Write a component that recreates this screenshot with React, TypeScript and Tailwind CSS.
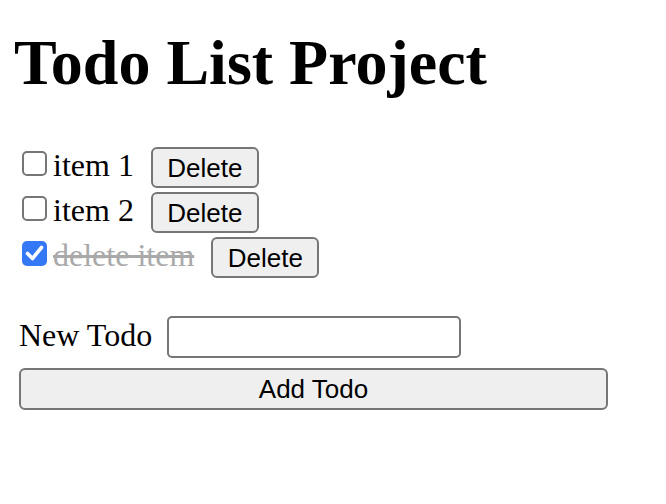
import React from "react";

const serif = "font-['Liberation_Serif',serif]";
const sans = "font-['Liberation_Sans',Arial,sans-serif]";

function Check({ checked }: { checked: boolean }) {
  if (checked) {
    return (
      <div className="ml-[22px] mt-[6px] flex h-[25px] w-[25px] shrink-0 items-center justify-center rounded-[5px] bg-[#3478f6]">
        <svg width="25" height="25" viewBox="0 0 25 25">
          <path d="M5.5 12.5 L10.5 17.5 L19.5 6.5" fill="none" stroke="#ffffff" strokeWidth="3.6" strokeLinecap="round" strokeLinejoin="round" />
        </svg>
      </div>
    );
  }
  return <div className="ml-[22px] mt-[6px] h-[25px] w-[25px] shrink-0 rounded-[5px] border-2 border-[#767676] bg-white" />;
}

function Row({ label, done }: { label: string; done?: boolean }) {
  return (
    <div className="flex h-[45px] items-start">
      <Check checked={!!done} />
      <span
        className={`${serif} ml-[6px] mt-[2px] whitespace-pre text-[32px] leading-[37px] ${
          done ? "text-[#a9a9a9] line-through" : "text-black"
        }`}
      >
        {label}
      </span>
      <button
        className={`${sans} ml-[17px] mt-[2px] flex h-[41px] w-[108px] shrink-0 items-center justify-center rounded-[6px] border-2 border-[#767676] bg-[#efefef] text-[26px] leading-[30px] text-black`}
      >
        Delete
      </button>
    </div>
  );
}

export default function App() {
  return (
    <div className="min-h-[504px] w-[666px] bg-white text-black">
      <h1 className={`${serif} ml-[14px] pt-[26px] text-[64px] font-bold leading-[73px]`}>Todo List Project</h1>
      <div className="mt-[46px] flex flex-col">
        <Row label="item 1" />
        <Row label="item 2" />
        <Row label="delete item" done />
      </div>
      <div className="mt-[36px] flex items-start">
        <span className={`${serif} ml-[19px] mt-[1px] whitespace-pre text-[32px] leading-[37px]`}>New Todo</span>
        <input
          type="text"
          className="ml-[15px] h-[42px] w-[294px] rounded-[5px] border-2 border-[#767676] bg-white outline-none"
        />
      </div>
      <button
        className={`${sans} ml-[19px] mt-[10px] flex h-[42px] w-[589px] items-center justify-center rounded-[6px] border-2 border-[#767676] bg-[#efefef] text-[26px] leading-[30px] text-black`}
      >
        Add Todo
      </button>
    </div>
  );
}
